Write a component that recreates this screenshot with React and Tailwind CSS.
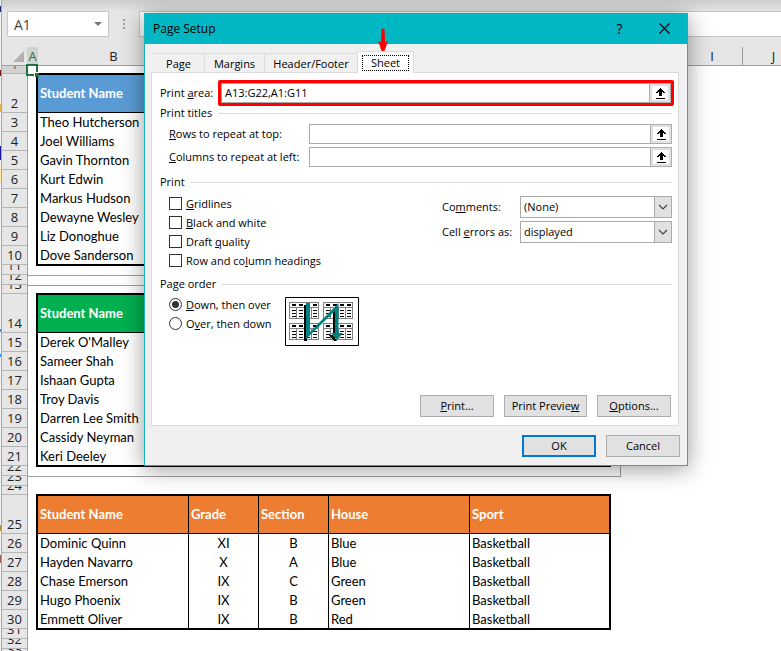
import React, { useState } from 'react';

const students = {
    blue: ['Theo Hutcherson', 'Joel Williams', 'Gavin Thornton', 'Kurt Edwin', 'Markus Hudson', 'Dewayne Wesley', 'Liz Donoghue', 'Dove Sanderson'],
    green: ["Derek O'Malley", 'Sameer Shah', 'Ishaan Gupta', 'Troy Davis', 'Darren Lee Smith', 'Cassidy Neyman', 'Keri Deeley'],
};

const basketball = [
    ['Dominic Quinn', 'XI', 'B', 'Blue', 'Basketball'],
    ['Hayden Navarro', 'X', 'A', 'Blue', 'Basketball'],
    ['Chase Emerson', 'IX', 'C', 'Green', 'Basketball'],
    ['Hugo Phoenix', 'IX', 'B', 'Green', 'Basketball'],
    ['Emmett Oliver', 'IX', 'B', 'Red', 'Basketball'],
];

const tallRows = [2, 14, 25];
const shortRows = [11, 12, 22, 23, 31, 32, 33];
const shorterRows = [13, 24];

const rowHeight = (n) => {
    if (n === 1) return 'h-2';
    if (tallRows.includes(n)) return 'h-[39px]';
    if (shortRows.includes(n)) return 'h-2.5';
    if (shorterRows.includes(n)) return 'h-[9px]';
    return 'h-[19px]';
};

const RowHeaders = () => (
    <div className="w-[26px] shrink-0 border-r border-[#9f9f9f] bg-[#e6e6e6] text-[13px] leading-[17px] text-[#222]">
        {Array.from({ length: 33 }, (_, i) => i + 1).map((n) => (
            <div
                key={n}
                className={`${rowHeight(n)} ${n === 1 ? 'bg-[#d2d2d2] text-[#217346]' : ''} flex items-end justify-center overflow-hidden border-b border-[#b5b5b5]`}
            >
                {n}
            </div>
        ))}
    </div>
);

const StudentTable = ({ color, headings, rows }) => (
    <div className="w-[575px] border-2 border-black bg-white">
        <table className="w-full table-fixed border-separate border-spacing-0 text-left text-[13px] leading-4">
            <colgroup>
                <col className="w-[151px]" />
                <col className="w-[70px]" />
                <col className="w-[70px]" />
                <col className="w-[141px]" />
                <col />
            </colgroup>
            <thead>
                <tr className={`h-[38px] text-white ${color}`}>
                    {headings.map((h, i) => (
                        <th key={i} className="border-r border-b border-black px-0.5 pt-0 pb-0.5 font-bold last:border-r-0">{h}</th>
                    ))}
                </tr>
            </thead>
            <tbody>
                {rows.map((row) => (
                    <tr key={row[0]} className="group h-[19px] last:h-[18px]">
                        {row.map((cell, i) => (
                            <td
                                key={i}
                                className={`border-r border-black px-0.5 pt-0 pb-0.5 group-last:pb-0 last:border-r-0 ${i === 1 || i === 2 ? 'text-center' : ''}`}
                            >
                                {cell}
                            </td>
                        ))}
                    </tr>
                ))}
            </tbody>
        </table>
    </div>
);

const blanks = ['', '', '', ''];
const namesOnly = (names) => names.map((name) => [name, ...blanks]);

const Group = ({ children }) => (
    <div className="flex h-3.5 items-center gap-1.5">
        <span>{children}</span>
        <span className="h-px flex-1 bg-[#dcdcdc]" />
    </div>
);

const RangeButton = ({ label }) => (
    <button type="button" aria-label={label} className="flex w-[22px] shrink-0 items-center justify-center border border-[#adadad] bg-[#e1e1e1]">
        <span className="flex h-3.5 w-4 items-center justify-center bg-white">
            <svg width="9" height="11" viewBox="0 0 9 11" shapeRendering="crispEdges">
                <path d="M4 0h1v1h1v1h1v1h1v1h1v1H7V4H6v4H3V4H2v1H0V4h1V3h1V2h1V1h1z" fill="#000" />
                <path d="M0 10h9v1H0z" fill="#000" />
            </svg>
        </span>
    </button>
);

const RangeInput = ({ id, value, onChange, label }) => (
    <div className="flex h-5 flex-1">
        <input
            id={id}
            type="text"
            value={value}
            onChange={(e) => onChange(e.target.value)}
            className="min-w-0 flex-1 border border-r-0 border-[#ababab] bg-white px-[3px] outline-none"
        />
        <RangeButton label={label} />
    </div>
);

const Check = ({ children }) => (
    <label className="flex h-[19px] items-center gap-1">
        <input type="checkbox" className="h-[13px] w-[13px] appearance-none border border-[#333] bg-white checked:bg-[#333]" />
        <span>{children}</span>
    </label>
);

const Radio = ({ checked, onChange, children }) => (
    <label className="flex h-[19px] items-center gap-1">
        <input
            type="radio"
            name="order"
            checked={checked}
            onChange={onChange}
            className="h-[13px] w-[13px] appearance-none rounded-full border border-[#333] bg-white p-0.5 checked:bg-[#333] checked:bg-clip-content"
        />
        <span>{children}</span>
    </label>
);

const Dropdown = ({ id, options }) => (
    <div className="relative h-[22px] w-[152px]">
        <select id={id} className="h-full w-full appearance-none border border-[#ababab] bg-white pl-[3px] outline-none">
            {options.map((o) => <option key={o}>{o}</option>)}
        </select>
        <span className="pointer-events-none absolute inset-y-0 right-0 flex w-[18px] items-center justify-center border border-[#ababab] bg-[#e1e1e1]">
            <svg width="10" height="6" viewBox="0 0 10 6" fill="none" stroke="#444" strokeWidth="1.2">
                <path d="M1 1l4 4 4-4" />
            </svg>
        </span>
    </div>
);

const MiniPage = ({ x, y }) => (
    <g transform={`translate(${x} ${y})`}>
        <path d="M.5 .5h29v16h-29zM.5 5.5h29M7.5 5v12M15.5 5v12M22.5 5v12" fill="none" stroke="#808080" />
        <path d="M3 3h4M10 3h4M17 3h4M24 3h4" stroke="#000" strokeWidth="2" />
        <path
            d="M3 8.500h4M3 11.500h4M3 14.500h4M10 8.500h4M10 11.500h4M10 14.500h4M17 8.500h4M17 11.500h4M17 14.500h4M24 8.500h4M24 11.500h4M24 14.500h4"
            stroke="#000"
        />
    </g>
);

const PageOrderPreview = () => (
    <svg width="74" height="49" viewBox="0 0 74 49">
        <path d="M.5 .5h73v48H.5z" fill="#fff" stroke="#000" />
        <g shapeRendering="crispEdges">
            <MiniPage x={4} y={5} />
            <MiniPage x={38} y={5} />
            <MiniPage x={4} y={26} />
            <MiniPage x={38} y={26} />
        </g>
        <path d="M19 8h3v36h-3zM48 13h3v24h-3zM44 38h4l4 6h-3z" fill="#000" />
        <path d="M21 6h4v29L53.500 6v30H58l-6 7-6-7h4V14L21 42z" fill="#008080" />
    </svg>
);

const DialogButton = ({ className = 'w-[74px]', primary, children }) => (
    <button
        type="button"
        className={`h-[22px] bg-[#e1e1e1] ${primary ? 'border-2 border-[#0078d7]' : 'border border-[#adadad]'} ${className}`}
    >
        {children}
    </button>
);

const PageSetup = () => {
    const [area, setArea] = useState('A13:G22,A1:G11');
    const [rows, setRows] = useState('');
    const [cols, setCols] = useState('');
    const [order, setOrder] = useState('down');

    return (
        <div
            role="dialog"
            aria-label="Page Setup"
            className="absolute top-[13px] left-[144px] flex h-[453px] w-[544px] flex-col border border-t-0 border-[#18b4bd] bg-[#f0f0f0] text-[11px] leading-[14px] text-black shadow-[0_3px_22px_rgba(0,0,0,0.4)]"
        >
            <div className="flex h-[31px] shrink-0 items-center bg-[#00b7c3] pl-2">
                <h1 className="flex-1 text-[12px]">Page Setup</h1>
                <button type="button" aria-label="Help" className="w-[45px] text-[14px]">?</button>
                <button type="button" aria-label="Close" className="flex w-[45px] justify-center">
                    <svg width="11" height="11" viewBox="0 0 11 11" stroke="#000" strokeWidth="1.1">
                        <path d="M.5 .5l10 10M10.500 .5l-10 10" />
                    </svg>
                </button>
            </div>

            {/* TABS */}
            <div className="relative z-10 -mb-px flex h-[29px] shrink-0 items-end pl-2">
                <div className="flex h-5 border-t border-[#dcdcdc]">
                    <button type="button" className="w-[52px] border-r border-[#dcdcdc]">Page</button>
                    <button type="button" className="w-[60px] border-r border-[#dcdcdc]">Margins</button>
                    <button type="button" className="w-[92px]">Header/Footer</button>
                </div>
                <button type="button" className="h-[22px] w-[57px] border border-b-0 border-[#dcdcdc] bg-white px-1 pt-[3px] pb-0.5">
                    <span className="flex h-4 items-center justify-center border border-dotted border-black">Sheet</span>
                </button>
            </div>

            {/* SHEET PANEL */}
            <div className="mr-2 ml-1.5 flex flex-1 flex-col border border-[#dcdcdc] bg-white pt-[7px] pr-1.5 pb-2 pl-2">
                <div className="-mr-0.5 flex items-center">
                    <label htmlFor="area" className="w-[58px] whitespace-nowrap">Print <u>a</u>rea:</label>
                    <div className="flex flex-1 rounded-xs border-3 border-[#fe0000]">
                        <RangeInput id="area" value={area} onChange={setArea} label="Select print area" />
                    </div>
                </div>
                <Group>Print titles</Group>
                <div className="flex flex-col gap-[3px] pt-1 pl-[9px]">
                    <div className="flex items-center">
                        <label htmlFor="rows" className="w-[140px] whitespace-nowrap"><u>R</u>ows to repeat at top:</label>
                        <RangeInput id="rows" value={rows} onChange={setRows} label="Select rows" />
                    </div>
                    <div className="flex items-center">
                        <label htmlFor="cols" className="w-[140px] whitespace-nowrap"><u>C</u>olumns to repeat at left:</label>
                        <RangeInput id="cols" value={cols} onChange={setCols} label="Select columns" />
                    </div>
                </div>

                <div className="mt-2">
                    <Group>Print</Group>
                </div>
                <div className="flex justify-between pt-[5px] pl-[9px]">
                    <div>
                        <Check><u>G</u>ridlines</Check>
                        <Check><u>B</u>lack and white</Check>
                        <Check>Draft <u>q</u>uality</Check>
                        <Check>Row and co<u>l</u>umn headings</Check>
                    </div>
                    <div className="flex flex-col gap-[3px] pt-0.5">
                        <div className="flex items-center">
                            <label htmlFor="comments" className="w-[78px]">Co<u>m</u>ments:</label>
                            <Dropdown id="comments" options={['(None)', 'At end of sheet', 'As displayed on sheet']} />
                        </div>
                        <div className="flex items-center">
                            <label htmlFor="errors" className="w-[78px]">Cell <u>e</u>rrors as:</label>
                            <Dropdown id="errors" options={['displayed', '<blank>', '--', '#N/A']} />
                        </div>
                    </div>
                </div>

                <div className="mt-[7px]">
                    <Group>Page order</Group>
                </div>
                <div className="flex pt-1 pl-[9px]">
                    <div className="w-[116px]">
                        <Radio checked={order === 'down'} onChange={() => setOrder('down')}><u>D</u>own, then over</Radio>
                        <Radio checked={order === 'over'} onChange={() => setOrder('over')}>O<u>v</u>er, then down</Radio>
                    </div>
                    <div className="pt-0.5">
                        <PageOrderPreview />
                    </div>
                </div>

                <div className="mt-auto flex justify-end gap-2.5 pr-px">
                    <DialogButton><u>P</u>rint...</DialogButton>
                    <DialogButton className="w-[83px]">Print Previe<u>w</u></DialogButton>
                    <DialogButton><u>O</u>ptions...</DialogButton>
                </div>
            </div>

            <div className="flex shrink-0 justify-end gap-2.5 pt-[9px] pr-[7px] pb-2">
                <DialogButton primary>OK</DialogButton>
                <DialogButton>Cancel</DialogButton>
            </div>
        </div>
    );
};

const App = () => (
    <div className="relative flex h-screen overflow-hidden bg-white font-['Open_Sans',sans-serif] text-black">
        {/* edge of the window behind */}
        <div className="flex w-0.5 shrink-0 flex-col border-r border-[#a6a6a6] bg-[#f4f4f4]">
            <span className="mt-1.5 h-1.5 bg-[#1c2a7a]" />
            <span className="mt-[58px] h-1.5 bg-[#7a1414]" />
            <span className="mt-7 h-2 bg-[#e8b64a]" />
            <span className="mt-[34px] h-3.5 bg-[#1414a0]" />
            <span className="mt-2 h-3.5 bg-[#ffe699]" />
            <span className="mt-[147px] h-[3px] bg-[#2a8cf0]" />
            <span className="mt-[22px] h-[3px] bg-[#2a8cf0]" />
            <span className="mt-[168px] h-1.5 bg-[#b09030]" />
            <span className="mt-6 h-2 bg-[#a05a5a]" />
        </div>

        <div className="flex min-w-0 flex-1 flex-col">
            {/* FORMULA BAR */}
            <div className="flex h-[47px] shrink-0 bg-[#e6e6e6] bg-linear-to-b from-[#cdcdcd] to-[#e6e6e6] to-25% pt-[11px] pl-[5px]">
                <div className="flex h-[26px] w-[102px] items-center justify-between border border-[#c6c6c6] bg-white px-1.5 text-[14px] text-[#444]">
                    <span>A1</span>
                    <svg width="8" height="4" viewBox="0 0 8 4"><path d="M0 0h8L4 4z" fill="#777" /></svg>
                </div>
                <div className="flex h-[26px] w-[30px] flex-col items-center justify-center gap-0.5">
                    <span className="h-0.5 w-0.5 bg-[#a0a0a0]" />
                    <span className="h-0.5 w-0.5 bg-[#a0a0a0]" />
                    <span className="h-0.5 w-0.5 bg-[#a0a0a0]" />
                </div>
                <div className="h-[26px] flex-1 border border-r-0 border-[#c6c6c6] bg-white" />
            </div>

            {/* COLUMN HEADERS */}
            <div className="flex h-[19px] shrink-0 overflow-hidden border-b border-[#9f9f9f] bg-[#e6e6e6] text-[13px] leading-[19px] text-[#222]">
                <div className="flex w-[25px] shrink-0 items-end justify-end pr-[3px] pb-[3px]">
                    <svg width="11" height="11" viewBox="0 0 11 11"><path d="M11 0v11H0z" fill="#b1b1b1" /></svg>
                </div>
                <div className="w-[11px] shrink-0 bg-[#d2d2d2] text-center text-[#217346]">A</div>
                <div className="w-[151px] shrink-0 text-center">B</div>
                {/* C to H lie under the dialog */}
                <div className="w-[493px] shrink-0" />
                <div className="w-[61px] shrink-0 border-r border-[#9f9f9f] text-center">I</div>
                <div className="w-[61px] shrink-0 text-center">J</div>
            </div>

            <div className="flex min-h-0 flex-1">
                <RowHeaders />
                <div className="relative font-[Lato,sans-serif]">
                    <div className="w-[593px] border-r border-b border-[#9f9f9f] pt-[7px] pb-[9px] pl-2">
                        <StudentTable color="bg-[#5b9bd5]" headings={['Student Name', ...blanks]} rows={namesOnly(students.blue)} />
                    </div>
                    <div className="mt-[9px] w-[593px] border border-l-0 border-[#9f9f9f] pt-[7px] pb-[9px] pl-2">
                        <StudentTable color="bg-[#00b050]" headings={['Student Name', ...blanks]} rows={namesOnly(students.green)} />
                    </div>
                    <div className="pt-[17px] pl-2">
                        <StudentTable
                            color="bg-[#ed7d31]"
                            headings={['Student Name', 'Grade', 'Section', 'House', 'Sport']}
                            rows={basketball}
                        />
                    </div>
                    {/* active cell */}
                    <div className="absolute -top-0.5 -left-0.5 h-3 w-3 border-2 border-[#217346] bg-white">
                        <span className="absolute -right-[3px] -bottom-[3px] h-[5px] w-[5px] border-t border-l border-white bg-[#217346]" />
                    </div>
                </div>
            </div>
        </div>

        <PageSetup />

        {/* pointer to the Sheet tab */}
        <svg className="absolute top-7 left-[378px]" width="10" height="28" viewBox="0 0 10 28">
            <path d="M3.500 1Q5 0 6.500 1L7 14l3-1-5 14L0 13l3 1z" fill="#fe0000" />
        </svg>
    </div>
);

export default App;
